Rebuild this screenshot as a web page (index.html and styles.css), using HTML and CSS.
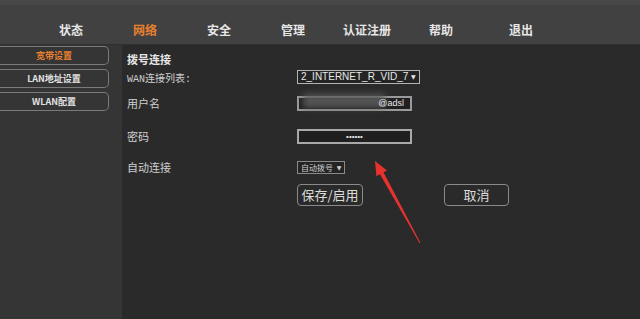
FILE: index.html
```html
<!DOCTYPE html>
<html lang="zh-CN">
	<head>
		<meta charset="UTF-8" />
		<title>网络设置</title>
		<link rel="stylesheet" href="styles.css">
	</head>
	<body>
		<div class="topbar">
			<ul class="nav">
				<li>状态</li>
				<li class="active">网络</li>
				<li>安全</li>
				<li>管理</li>
				<li>认证注册</li>
				<li>帮助</li>
				<li class="last">退出</li>
			</ul>
		</div>
		<div class="main">
			<div class="sidebar">
				<div class="side-btn active">宽带设置</div>
				<div class="side-btn">LAN地址设置</div>
				<div class="side-btn">WLAN配置</div>
			</div>
			<div class="content">
				<div class="title">拨号连接</div>
				<div class="form">
					<div class="label mono">WAN连接列表:</div>
					<div class="field"><span class="select">2_INTERNET_R_VID_7 <i>▼</i></span></div>

					<div class="label">用户名</div>
					<div class="field">
						<span class="input user"><span class="smudge"></span><span class="user-text">@adsl</span></span>
					</div>

					<div class="label">密码</div>
					<div class="field"><span class="input pass">••••••</span></div>

					<div class="label">自动连接</div>
					<div class="field"><span class="select small">自动拨号 <i>▼</i></span></div>

					<div class="label"></div>
					<div class="field buttons">
						<span class="btn">保存/启用</span>
						<span class="btn cancel">取消</span>
					</div>
				</div>
			</div>
		</div>
		<svg class="arrow" width="70" height="100" viewBox="0 0 70 100">
			<polygon fill="#e8322e" points="15,11 27,20.4 23.5,22.3 60.4,92.8 59.6,93.2 20,24.3 16.4,26.2" />
		</svg>
	</body>
</html>
```

FILE: styles.css
```css
body {
	margin: 0;
	width: 640px;
	height: 319px;
	overflow: hidden;
	background-color: #2b2b2b;
	font-family: "Noto Sans CJK SC", "Liberation Sans", sans-serif;
	position: relative;
}
.topbar {
	height: 39px;
	border-top: 5px solid #484848;
	background-color: #414141;
}
.nav {
	list-style: none;
	margin: 0;
	padding: 0 0 0 34px;
	display: flex;
	height: 100%;
	align-items: center;
	padding-top: 10px;
	box-sizing: border-box;
}
.nav li {
	width: 74px;
	text-align: center;
	font-size: 12px;
	font-weight: bold;
	color: #e6e6e6;
}
.nav li.active {
	color: #e8802f;
}
.nav li.last {
	margin-left: 6px;
}
.main {
	display: flex;
	height: 275px;
	border-top: 1px solid #303030;
}
.sidebar {
	width: 122px;
	background-color: #353535;
	padding-top: 1px;
	flex-shrink: 0;
}
.side-btn {
	width: 109px;
	height: 19px;
	box-sizing: border-box;
	border: 1px solid #7a7a7a;
	border-left: none;
	border-radius: 0 5px 5px 0;
	margin-bottom: 4px;
	text-align: center;
	font-size: 9px;
	font-weight: bold;
	line-height: 17px;
	color: #e2e2e2;
}
.side-btn.active {
	color: #e8802f;
}
.content {
	flex: 1;
	background-color: #2a2a2a;
	border-top-left-radius: 6px;
	padding-left: 5px;
	color: #d8d8d8;
}
.title {
	height: 22px;
	padding-top: 7px;
	box-sizing: border-box;
	font-size: 11px;
	font-weight: bold;
	line-height: 14px;
	color: #e6e6e6;
}
.form {
	display: grid;
	grid-template-columns: 170px auto;
	grid-template-rows: 20px 32px 34px 28px 28px;
	align-items: center;
	font-size: 11px;
}
.label {
	color: #cfcfcf;
}
.label.mono {
	font-family: "Liberation Mono", "Noto Sans CJK SC", monospace;
	font-size: 10px;
}
.field {
	display: flex;
	align-items: center;
}
.select {
	display: inline-block;
	height: 14px;
	box-sizing: border-box;
	border: 1px solid #b4b4b4;
	padding: 0 3px;
	font-family: "Liberation Sans", sans-serif;
	font-size: 10px;
	line-height: 12px;
	color: #e8e8e8;
	background-color: #242424;
}
.select i {
	font-style: normal;
	font-family: "DejaVu Sans", sans-serif;
	font-size: 6px;
	vertical-align: 1px;
}
.select.small {
	height: 13px;
	font-family: "Noto Sans CJK SC", sans-serif;
	font-size: 8px;
	line-height: 11px;
	color: #cfcfcf;
	border-color: #8a8a8a;
}
.select.small i {
	margin-left: 2px;
}
.input {
	display: block;
	width: 115px;
	height: 15px;
	box-sizing: border-box;
	border: 2px solid #a9a9a9;
	background-color: #1f1f1f;
	font-family: "Liberation Sans", sans-serif;
	font-size: 9px;
	line-height: 11px;
	color: #e8e8e8;
}
.input.user {
	display: flex;
	align-items: center;
	justify-content: flex-end;
	padding-right: 6px;
	border-color: #9a9a9a;
	position: relative;
	overflow: visible;
}
.smudge {
	position: absolute;
	left: 4px;
	top: -4px;
	width: 82px;
	height: 14px;
	background-color: #5a5a5a;
	filter: blur(3px);
	opacity: 0.9;
}
.user-text {
	position: relative;
}
.input.pass {
	text-align: center;
	font-size: 8px;
}
.buttons {
	gap: 81px;
}
.btn {
	width: 66px;
	height: 22px;
	box-sizing: border-box;
	border: 1px solid #8a8a8a;
	border-radius: 4px;
	text-align: center;
	font-size: 13px;
	line-height: 20px;
	color: #dcdcdc;
}
.btn.cancel {
	width: 65px;
}
.arrow {
	position: absolute;
	left: 360px;
	top: 150px;
}
```
